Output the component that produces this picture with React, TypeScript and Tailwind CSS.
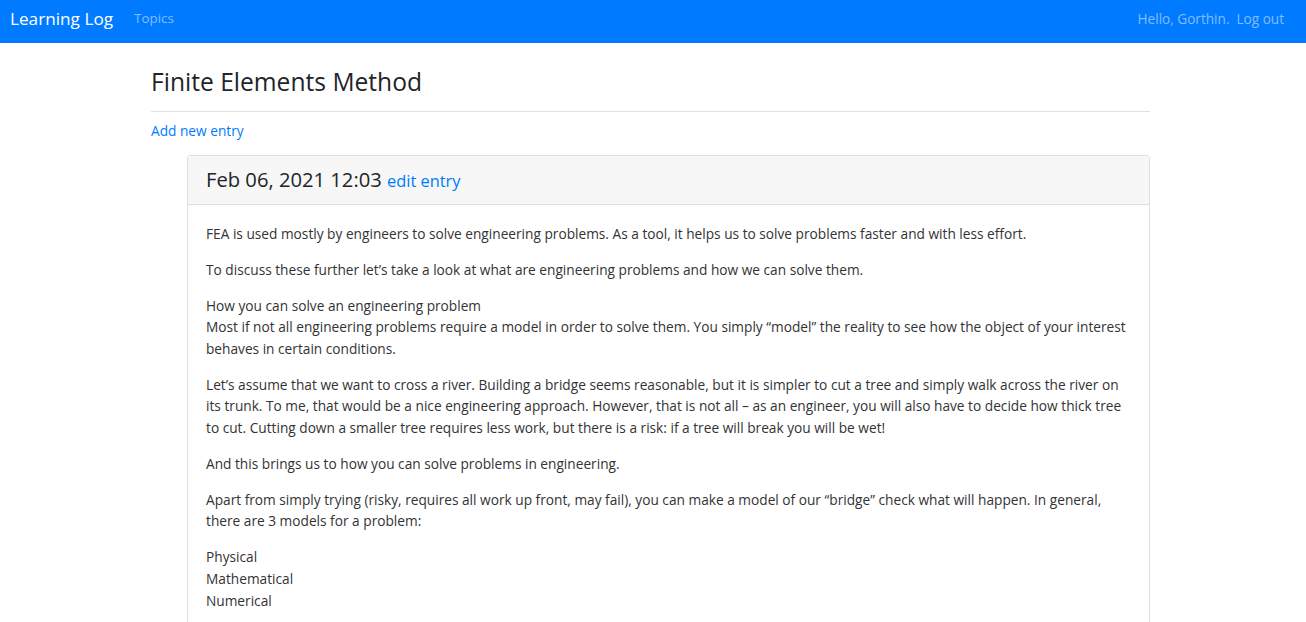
import React from "react";

const paras: React.ReactNode[] = [
  "FEA is used mostly by engineers to solve engineering problems. As a tool, it helps us to solve problems faster and with less effort.",
  "To discuss these further let’s take a look at what are engineering problems and how we can solve them.",
  <>
    How you can solve an engineering problem
    <br />
    Most if not all engineering problems require a model in order to solve them. You simply “model” the reality to see how the object of your interest behaves in certain conditions.
  </>,
  "Let’s assume that we want to cross a river. Building a bridge seems reasonable, but it is simpler to cut a tree and simply walk across the river on its trunk. To me, that would be a nice engineering approach. However, that is not all – as an engineer, you will also have to decide how thick tree to cut. Cutting down a smaller tree requires less work, but there is a risk: if a tree will break you will be wet!",
  "And this brings us to how you can solve problems in engineering.",
  "Apart from simply trying (risky, requires all work up front, may fail), you can make a model of our “bridge” check what will happen. In general, there are 3 models for a problem:",
  <>
    Physical
    <br />
    Mathematical
    <br />
    Numerical
  </>,
];

export default function App() {
  return (
    <div
      className="min-h-screen bg-white text-[#212529]"
      style={{ fontFamily: '"Open Sans", "Noto Sans", sans-serif' }}
    >
      <nav className="h-[43px] bg-[#007bff] flex items-center pl-[10px] pr-[22px]">
        <span className="text-[17.2px] text-white leading-none mr-[21px] -mt-[6px]">Learning Log</span>
        <span className="text-[13.4px] text-[#80bdff] leading-none -mt-[6px]">Topics</span>
        <div className="ml-auto flex items-center gap-[7px] text-[13.6px] text-[#80bdff] leading-none -mt-[6px]">
          <span>Hello, Gorthin.</span>
          <span>Log out</span>
        </div>
      </nav>
      <main className="ml-[151px] w-[999px]">
        <div className="pt-[24px] pb-[14px] border-b border-[#dee2e6]">
          <h3 className="text-[24.6px] leading-[30px] font-normal">Finite Elements Method</h3>
        </div>
        <p className="mt-[8px] mb-[13px] text-[13.7px] leading-[21.6px] text-[#007bff]">Add new entry</p>
        <div className="ml-[36px] border border-[#dfdfdf] rounded-[3px]">
          <div className="bg-[#f7f7f7] border-b border-[#dfdfdf] px-[18px] py-[10px]">
            <h4 className="text-[20.2px] leading-[26px] font-normal">
              Feb 06, 2021 12:03{" "}
              <small className="text-[16.4px] text-[#007bff]">edit entry</small>
            </h4>
          </div>
          <div className="px-[18px] pt-[18px] pb-[18px] text-[13.7px] leading-[21.6px] text-[#333]">
            {paras.map((p, i) => (
              <p key={i} className="mb-[14.4px]">
                {p}
              </p>
            ))}
          </div>
        </div>
      </main>
    </div>
  );
}
